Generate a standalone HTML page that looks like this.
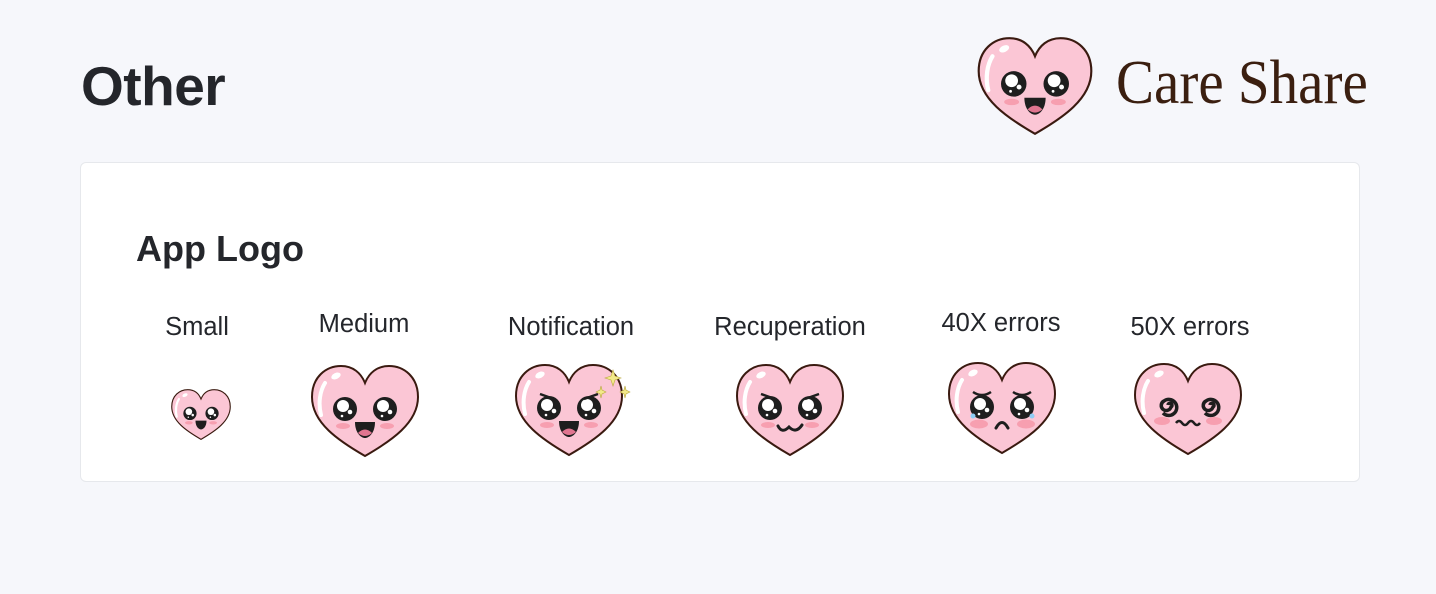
<!DOCTYPE html>
<html><head><meta charset="utf-8"><style>
body{margin:0;width:1436px;height:594px;background:#f6f7fb;font-family:"Liberation Sans",sans-serif;color:#24262b;position:relative;overflow:hidden}
.a{position:absolute}
h1{position:absolute;left:81px;top:59px;margin:0;font-size:55px;font-weight:700;line-height:1;letter-spacing:-0.5px}
.card{position:absolute;left:80px;top:162px;width:1278px;height:318px;background:#fff;border:1px solid #e6e8ec;border-radius:6px}
.lbl{position:absolute;font-size:25.5px;transform:translateX(-50%);white-space:nowrap}
svg{position:absolute}
</style></head><body>
<svg width="0" height="0" style="position:absolute"><defs>
<g id="h"><path d="M56,93 C30,78 3,60 3,34 C3,14 17,3 32,3 C44,3 52,10 56,20 C60,10 68,3 80,3 C95,3 109,14 109,34 C109,60 82,78 56,93Z" fill="#fbc6d5" stroke="#3a1a10" stroke-width="2"/>
<path d="M12,52 C9,40 11,28 16,20" stroke="#fff" stroke-width="4" fill="none" stroke-linecap="round"/>
<ellipse cx="27" cy="13" rx="5" ry="3" fill="#fff" transform="rotate(-25 27 13)"/></g>
<g id="e"><circle r="12" fill="#1e1e1e"/><circle cx="-2" cy="-3" r="6" fill="#fff"/><circle cx="5" cy="3" r="2.3" fill="#fff"/><circle cx="-3" cy="7" r="1.3" fill="#fff"/></g>
<g id="b"><ellipse cx="34" cy="63" rx="7" ry="3" fill="#f79fb0"/><ellipse cx="78" cy="63" rx="7" ry="3" fill="#f79fb0"/></g>
<path id="m" d="M46,59 L66,59 C66,70 60,75 56,75 C52,75 46,70 46,59Z" fill="#1e1e1e"/>
</defs></svg>

<h1>Other</h1>
<svg class="a" style="left:975px;top:35px" width="120" height="102" viewBox="0 0 112 96"><use href="#h"/><use href="#e" x="36" y="46"/><use href="#e" x="76" y="46"/><use href="#b"/><use href="#m"/><path d="M49,70 Q56,63 63,70 Q56,76 49,70Z" fill="#e07590"/></svg>
<div class="a" style="left:1116px;top:52px;font-family:'Liberation Serif',serif;font-size:62px;line-height:1;color:#3b1f10;transform:scaleX(0.92);transform-origin:left top;white-space:nowrap">Care Share</div>

<div class="card"></div>
<div class="a" style="left:136px;top:228px;font-size:36px;font-weight:700">App Logo</div>
<div class="lbl" style="left:197px;top:313px">Small</div>
<div class="lbl" style="left:364px;top:310px">Medium</div>
<div class="lbl" style="left:571px;top:313px">Notification</div>
<div class="lbl" style="left:790px;top:313px">Recuperation</div>
<div class="lbl" style="left:1001px;top:309px">40X errors</div>
<div class="lbl" style="left:1190px;top:313px">50X errors</div>

<svg style="left:170px;top:388px" width="62" height="53" viewBox="0 0 112 96"><use href="#h"/><use href="#e" x="36" y="46"/><use href="#e" x="76" y="46"/><use href="#b"/><use href="#m"/></svg>
<svg style="left:309px;top:363px" width="112" height="96" viewBox="0 0 112 96"><use href="#h"/><use href="#e" x="36" y="46"/><use href="#e" x="76" y="46"/><use href="#b"/><use href="#m"/><path d="M49,70 Q56,63 63,70 Q56,76 49,70Z" fill="#e07590"/></svg>
<svg style="left:513px;top:362px" width="120" height="96" viewBox="0 0 120 96"><use href="#h"/><use href="#e" x="36" y="46"/><use href="#e" x="76" y="46"/><path d="M27,32 L41,37 M85,32 L71,37" stroke="#1e1e1e" stroke-width="2.5"/><use href="#b"/><use href="#m"/><path d="M49,70 Q56,63 63,70 Q56,76 49,70Z" fill="#e07590"/><path d="M100,8 L102,14 L108,16 L102,18 L100,24 L98,18 L92,16 L98,14Z M112,24 L113,28 L117,30 L113,32 L112,36 L111,32 L107,30 L111,28Z M88,24 L89,28 L93,30 L89,32 L88,36 L87,32 L83,30 L87,28Z" fill="#f3e98a" stroke="#b9a840" stroke-width=".6"/></svg>
<svg style="left:734px;top:362px" width="112" height="96" viewBox="0 0 112 96"><use href="#h"/><use href="#e" x="36" y="46"/><use href="#e" x="76" y="46"/><path d="M27,32 L41,37 M85,32 L71,37" stroke="#1e1e1e" stroke-width="2.5"/><use href="#b"/><path d="M44,64 Q48,72 55,65 Q62,72 68,63" stroke="#1e1e1e" stroke-width="3" fill="none" stroke-linecap="round"/></svg>
<svg style="left:946px;top:360px" width="112" height="96" viewBox="0 0 112 96"><use href="#h"/><use href="#e" x="36" y="47"/><use href="#e" x="76" y="47"/><path d="M27,32 Q36,38 45,32 M67,32 Q76,38 85,32" stroke="#1e1e1e" stroke-width="2.5" fill="none"/><circle cx="27" cy="56" r="2.5" fill="#8ecdf5"/><circle cx="86" cy="56" r="2.5" fill="#8ecdf5"/><ellipse cx="33" cy="64" rx="9" ry="4.5" fill="#f79fb0"/><ellipse cx="80" cy="64" rx="9" ry="4.5" fill="#f79fb0"/><path d="M50,68 Q56,57 62,68" stroke="#1e1e1e" stroke-width="3" fill="none" stroke-linecap="round"/></svg>
<svg style="left:1132px;top:361px" width="112" height="96" viewBox="0 0 112 96"><use href="#h"/><path d="M36,44 a2,2 0 1 1 3,2 a5,5 0 1 1 -7,-6 a8,8 0 1 1 -1,12" stroke="#1e1e1e" stroke-width="3.5" fill="none"/><path d="M78,44 a2,2 0 1 1 3,2 a5,5 0 1 1 -7,-6 a8,8 0 1 1 -1,12" stroke="#1e1e1e" stroke-width="3.5" fill="none"/><ellipse cx="30" cy="60" rx="8" ry="4" fill="#f79fb0"/><ellipse cx="82" cy="60" rx="8" ry="4" fill="#f79fb0"/><path d="M44,62 q3,-4 6,0 q3,4 6,0 q3,-4 6,0 q3,4 6,0" stroke="#1e1e1e" stroke-width="2.5" fill="none"/></svg>
</body></html>
